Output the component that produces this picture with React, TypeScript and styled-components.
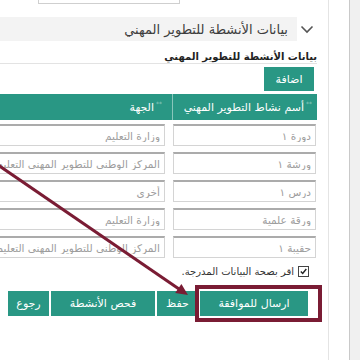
import React from 'react';
import styled, { createGlobalStyle } from 'styled-components';

const GlobalStyle = createGlobalStyle`
  body {
    margin: 0;
    background: #fff;
    font-family: "DejaVu Sans", "Noto Sans", sans-serif;
  }
`;

const teal = '#299784';
const mark = '#7a1c34';

const Page = styled.div`
  position: relative;
  display: flex;
  width: 360px;
  height: 360px;
  overflow: hidden;
  background: #fff;
`;

const Main = styled.main`
  flex: 0 0 328px;
  box-sizing: border-box;
  padding-right: 11px;
  direction: rtl;
  overflow: hidden;
  display: flex;
  flex-direction: column;
`;

const Gutter = styled.div`
  flex: 0 0 20px;
  border-left: 1px solid #e4e4e4;
  border-right: 1px solid #c9c9c9;
`;

const Rest = styled.div`
  flex: 1;
  background: #f0f0f0;
`;

const TopStub = styled.div`
  align-self: flex-start;
  width: 140px;
  height: 3px;
  margin-right: 137px;
  border: 1px solid #cfcfcf;
  border-top: none;
`;

const SectionHead = styled.div`
  display: flex;
  align-items: center;
  height: 24px;
  margin-top: 13px;
`;

const Chevron = styled.svg`
  flex: 0 0 14px;
  margin-right: 3px;
`;

const SectionBar = styled.div`
  flex: 1;
  height: 100%;
  margin-right: 3px;
  padding-right: 9px;
  display: flex;
  align-items: center;
  background: #f3f3f3;
  color: #3d3d3d;
  font-size: 13px;
  white-space: nowrap;
`;

const SubTitle = styled.div`
  margin-top: 9px;
  font-size: 10px;
  font-weight: bold;
  line-height: 13px;
  color: #222;
  border-bottom: 1px solid #e3e3e3;
`;

const AddButton = styled.button`
  align-self: flex-start;
  width: 50px;
  height: 24px;
  margin: 3px 3px 0 0;
  padding: 0;
  border: none;
  background: ${teal};
  color: #fff;
  font-family: inherit;
  font-size: 11px;
`;

const Table = styled.div`
  align-self: flex-start;
  width: 400px;
  margin-top: 3px;
`;

const HeadRow = styled.div`
  display: grid;
  grid-template-columns: 145px 1fr;
  height: 26px;
  background: ${teal};
  color: #fff;
  font-size: 11px;
`;

const HeadCell = styled.div<{ $pad: number; $divider?: boolean }>`
  display: flex;
  align-items: center;
  gap: 2px;
  padding-right: ${p => p.$pad}px;
  border-left: ${p => (p.$divider ? '1px solid rgba(255,255,255,0.45)' : 'none')};
  white-space: nowrap;
`;

const Req = styled.span`
  font-size: 6px;
  opacity: 0.5;
  align-self: flex-start;
  margin-top: 6px;
`;

const BodyRow = styled.div`
  display: grid;
  grid-template-columns: 145px 1fr;
  height: 28px;
  box-sizing: border-box;
  padding-top: 4px;
`;

const Cell = styled.div<{ $right: number; $left: number }>`
  padding: 0 ${p => p.$right}px 0 ${p => p.$left}px;
`;

const Field = styled.input`
  display: block;
  width: 100%;
  height: 22px;
  box-sizing: border-box;
  margin: 0;
  padding: 0 4px;
  border: 1px solid #d4d4d4;
  border-top: 2px solid #ababab;
  border-radius: 0;
  background: #fff;
  color: #9d9d9d;
  font-family: inherit;
  font-size: 10.5px;
  outline: none;
`;

const CheckRow = styled.label`
  display: flex;
  align-items: center;
  gap: 4px;
  height: 14px;
  margin: 4px 8px 0 0;
  color: #333;
  font-size: 10px;
`;

const Box = styled.span`
  display: flex;
  align-items: center;
  justify-content: center;
  width: 9px;
  height: 9px;
  border: 1px solid #444;
  background: #fff;
`;

const ActionRow = styled.div`
  align-self: flex-start;
  display: flex;
  gap: 2px;
  height: 25px;
  margin: 13px 9px 0 0;
`;

const ActionButton = styled.button<{ $w: number }>`
  width: ${p => p.$w}px;
  height: 25px;
  padding: 0;
  border: none;
  background: ${teal};
  color: #fff;
  font-family: inherit;
  font-size: 11px;
  white-space: nowrap;
`;

const Marked = styled.div`
  position: relative;
`;

const MarkFrame = styled.div`
  position: absolute;
  top: -6px;
  bottom: -6px;
  left: -5px;
  right: -14px;
  border: 4px solid ${mark};
  pointer-events: none;
`;

const Annotation = styled.svg`
  position: absolute;
  left: 0;
  top: 0;
  pointer-events: none;
`;

const rows = [
  { name: 'دورة ١', org: 'وزارة التعليم' },
  { name: 'ورشة ١', org: 'المركز الوطني للتطوير المهني التعليمي' },
  { name: 'درس ١', org: 'أخرى' },
  { name: 'ورقة علمية', org: 'وزارة التعليم' },
  { name: 'حقيبة ١', org: 'المركز الوطني للتطوير المهني التعليمي' },
];

export default function App() {
  return (
    <Page>
      <GlobalStyle />
      <Main>
        <TopStub />
        <SectionHead>
          <Chevron width="14" height="9" viewBox="0 0 14 9">
            <path d="M1.5 1.5 L7 7 L12.5 1.5" fill="none" stroke="#555" strokeWidth="1.6" />
          </Chevron>
          <SectionBar>بيانات الأنشطة للتطوير المهني</SectionBar>
        </SectionHead>
        <SubTitle>بيانات الأنشطة للتطوير المهني</SubTitle>
        <AddButton>اضافة</AddButton>

        <Table>
          <HeadRow>
            <HeadCell $pad={5} $divider>
              <Req>**</Req>
              أسم نشاط التطوير المهني
            </HeadCell>
            <HeadCell $pad={10}>
              <Req>**</Req>
              الجهة
            </HeadCell>
          </HeadRow>
          {rows.map((r, i) => (
            <BodyRow key={i}>
              <Cell $right={1} $left={1}>
                <Field readOnly value={r.name} />
              </Cell>
              <Cell $right={7} $left={0}>
                <Field readOnly value={r.org} />
              </Cell>
            </BodyRow>
          ))}
        </Table>

        <CheckRow>
          <Box>
            <svg width="7" height="7" viewBox="0 0 7 7">
              <path d="M0.8 3.6 L2.7 5.5 L6.3 1" fill="none" stroke="#222" strokeWidth="1.4" />
            </svg>
          </Box>
          اقر بصحة البيانات المدرجة.
        </CheckRow>

        <ActionRow>
          <Marked>
            <ActionButton $w={108}>ارسال للموافقة</ActionButton>
            <MarkFrame />
          </Marked>
          <ActionButton $w={41}>حفظ</ActionButton>
          <ActionButton $w={104}>فحص الأنشطة</ActionButton>
          <ActionButton $w={41}>رجوع</ActionButton>
        </ActionRow>
      </Main>
      <Gutter />
      <Rest />

      <Annotation width="360" height="360" viewBox="0 0 360 360">
        <line x1="-2" y1="165" x2="179" y2="289" stroke={mark} strokeWidth="3" />
        <polygon points="188,295 175.2,293.1 181.4,284.1" fill={mark} />
      </Annotation>
    </Page>
  );
}
